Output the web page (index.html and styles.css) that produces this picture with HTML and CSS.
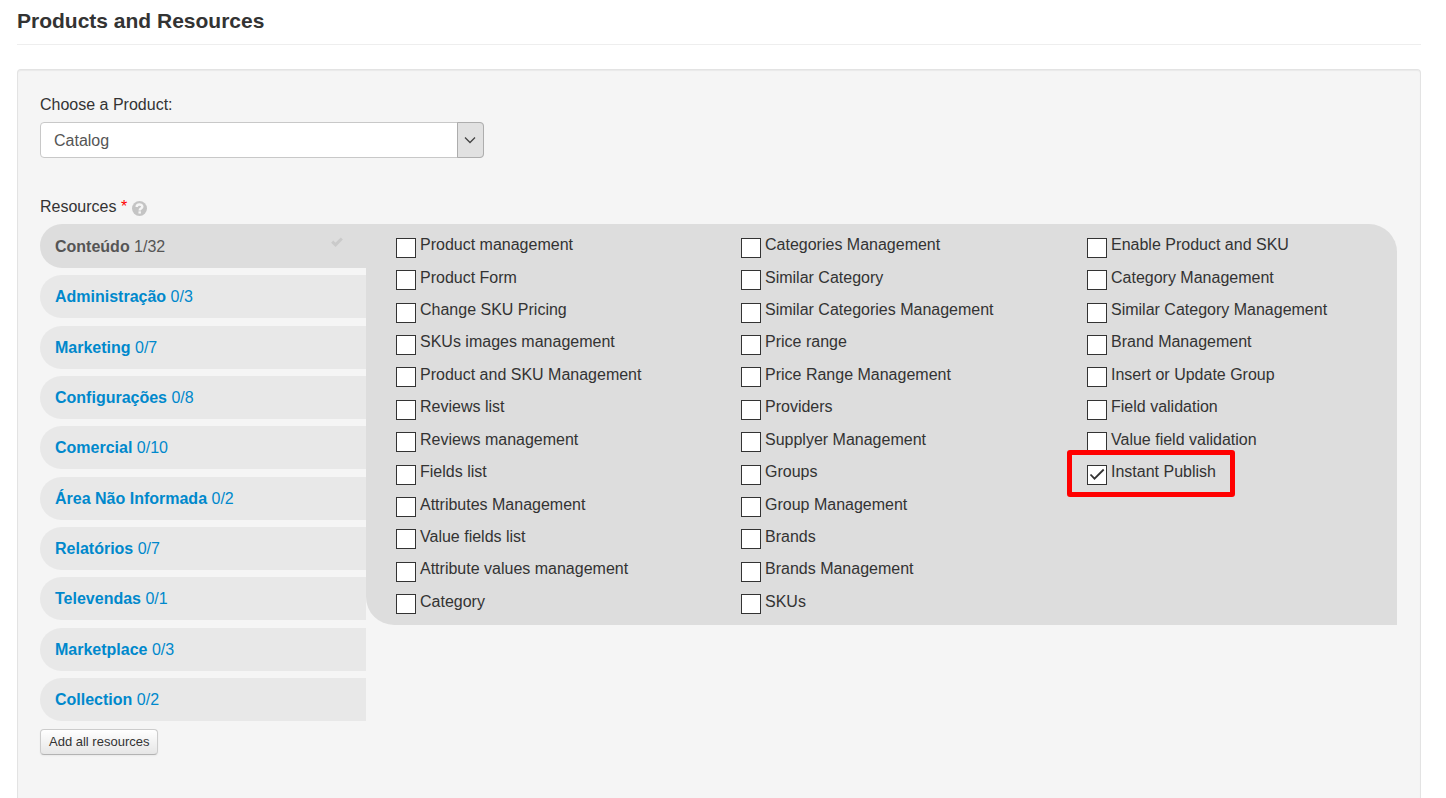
FILE: index.html
```html
<!DOCTYPE html>
<html lang="en">
<head>
<meta charset="utf-8">
<title>Products and Resources</title>
<link rel="stylesheet" href="styles.css">
</head>
<body>
<main class="page">
  <h1 class="title">Products and Resources</h1>
  <form class="well">
    <label class="field-label" for="product">Choose a Product:</label>
    <div class="select-wrap">
      <select id="product" class="select"><option>Catalog</option></select>
      <span class="select-arrow"><svg width="12" height="8" viewBox="0 0 12 8"><path d="M1 1.500 6 6.500 11 1.500" fill="none" stroke="#444" stroke-width="1.300"/></svg></span>
    </div>
    <div class="resources-label">Resources <span class="required">*</span>
      <svg class="help" width="15" height="15" viewBox="0 0 16 16"><circle cx="8" cy="8" r="8" fill="#c4c4c4"/><path d="M5 6.300C5 2.900 11 2.900 11 6.200 11 8.200 8.200 8 8.200 10" fill="none" stroke="#f5f5f5" stroke-width="2.600"/><rect x="6.900" y="11" width="2.600" height="2.400" fill="#f5f5f5"/></svg>
    </div>
    <div class="resources">
      <nav class="tabs">
        <a class="tab active" href="#conteudo"><span><b>Conteúdo</b> 1/32</span><svg class="tick" width="12" height="10" viewBox="0 0 12 10"><path d="M1.200 4.600 4.500 7.800 10.800 1.500" fill="none" stroke="#cacaca" stroke-width="3"/></svg></a>
        <a class="tab" href="#administracao"><span><b>Administração</b> 0/3</span></a>
        <a class="tab" href="#marketing"><span><b>Marketing</b> 0/7</span></a>
        <a class="tab" href="#configuracoes"><span><b>Configurações</b> 0/8</span></a>
        <a class="tab" href="#comercial"><span><b>Comercial</b> 0/10</span></a>
        <a class="tab" href="#area"><span><b>Área Não Informada</b> 0/2</span></a>
        <a class="tab" href="#relatorios"><span><b>Relatórios</b> 0/7</span></a>
        <a class="tab" href="#televendas"><span><b>Televendas</b> 0/1</span></a>
        <a class="tab" href="#marketplace"><span><b>Marketplace</b> 0/3</span></a>
        <a class="tab" href="#collection"><span><b>Collection</b> 0/2</span></a>
      </nav>
      <div class="options" id="conteudo">
        <label class="option"><input type="checkbox">Product management</label>
        <label class="option"><input type="checkbox">Product Form</label>
        <label class="option"><input type="checkbox">Change SKU Pricing</label>
        <label class="option"><input type="checkbox">SKUs images management</label>
        <label class="option"><input type="checkbox">Product and SKU Management</label>
        <label class="option"><input type="checkbox">Reviews list</label>
        <label class="option"><input type="checkbox">Reviews management</label>
        <label class="option"><input type="checkbox">Fields list</label>
        <label class="option"><input type="checkbox">Attributes Management</label>
        <label class="option"><input type="checkbox">Value fields list</label>
        <label class="option"><input type="checkbox">Attribute values management</label>
        <label class="option"><input type="checkbox">Category</label>
        <label class="option"><input type="checkbox">Categories Management</label>
        <label class="option"><input type="checkbox">Similar Category</label>
        <label class="option"><input type="checkbox">Similar Categories Management</label>
        <label class="option"><input type="checkbox">Price range</label>
        <label class="option"><input type="checkbox">Price Range Management</label>
        <label class="option"><input type="checkbox">Providers</label>
        <label class="option"><input type="checkbox">Supplyer Management</label>
        <label class="option"><input type="checkbox">Groups</label>
        <label class="option"><input type="checkbox">Group Management</label>
        <label class="option"><input type="checkbox">Brands</label>
        <label class="option"><input type="checkbox">Brands Management</label>
        <label class="option"><input type="checkbox">SKUs</label>
        <label class="option"><input type="checkbox">Enable Product and SKU</label>
        <label class="option"><input type="checkbox">Category Management</label>
        <label class="option"><input type="checkbox">Similar Category Management</label>
        <label class="option"><input type="checkbox">Brand Management</label>
        <label class="option"><input type="checkbox">Insert or Update Group</label>
        <label class="option"><input type="checkbox">Field validation</label>
        <label class="option"><input type="checkbox">Value field validation</label>
        <label class="option highlighted"><input type="checkbox" checked>Instant Publish<svg class="check-mark" width="20" height="20" viewBox="0 0 20 20"><path d="M3.500 10.500 7.500 14.700 16.700 5.500" fill="none" stroke="#333" stroke-width="1.800"/></svg></label>
      </div>
    </div>
    <button class="btn" type="button">Add all resources</button>
  </form>
</main>
</body>
</html>
```
FILE: styles.css
```css
*,
*::after {
  box-sizing: border-box;
}

body {
  margin: 0;
  background: #fff;
  color: #333;
  font: 16px/20px "Liberation Sans", Arial, sans-serif;
}

.page {
  display: flex;
  flex-direction: column;
  min-height: 100vh;
  padding: 0 25px 0 17px;
}

.title {
  margin: 0 0 24px;
  padding: 8px 0 10px;
  border-bottom: 1px solid #eee;
  font-size: 21px;
  line-height: 26px;
}

.well {
  flex: 1;
  padding: 25px 23px 24px 22px;
  border: 1px solid #e3e3e3;
  border-bottom: 0;
  border-radius: 4px 4px 0 0;
  background: #f5f5f5;
  box-shadow: inset 0 1px 1px rgba(0, 0, 0, 0.05);
}

.field-label {
  display: block;
  margin-bottom: 7px;
}

.select-wrap {
  position: relative;
  width: 444px;
  max-width: 100%;
}

.select {
  display: block;
  width: 100%;
  height: 36px;
  padding: 1px 40px 0 13px;
  border: 1px solid #c8c8c8;
  border-radius: 4px;
  appearance: none;
  background: #fff;
  color: #555;
  font: inherit;
}

.select-arrow {
  position: absolute;
  top: 0;
  right: 0;
  bottom: 0;
  display: flex;
  align-items: center;
  justify-content: center;
  width: 27px;
  padding-right: 2px;
  border: 1px solid #adadad;
  border-radius: 0 4px 4px 0;
  background: #e1e1e1;
  pointer-events: none;
}

.resources-label {
  margin: 39px 0 7px;
}

.required {
  color: #f00;
}

.help {
  vertical-align: -4px;
}

.resources {
  display: flex;
  align-items: flex-start;
}

.tabs {
  display: flex;
  flex: 0 0 326px;
  flex-direction: column;
  justify-content: space-between;
  min-height: 497px;
}

.tab {
  display: flex;
  justify-content: space-between;
  padding: 12px 23px 11px 15px;
  border-radius: 22px 0 0 22px;
  background: #e8e8e8;
  color: #08c;
  text-decoration: none;
}

.tab.active {
  padding-top: 13px;
  background: #ddd;
  color: #555;
}

.options {
  display: grid;
  flex: 1;
  grid-auto-flow: column;
  grid-template-rows: repeat(12, 1fr);
  grid-template-columns: 345fr 346fr 310fr;
  min-height: 401px;
  padding: 5px 0 7px 30px;
  border-radius: 0 28px 0 28px;
  background: #ddd;
}

.option {
  position: relative;
  display: flex;
  align-items: center;
}

.option input {
  width: 20px;
  height: 20px;
  margin: 5px 4px 0 0;
  border: 1px solid #333;
  appearance: none;
  background: #fff;
}

.check-mark {
  position: absolute;
  top: 8px;
  left: 0;
}

.highlighted::after {
  content: "";
  position: absolute;
  top: -6px;
  left: -20px;
  width: 168px;
  height: 47px;
  border: 5px solid #f00;
  border-radius: 3px;
}

.btn {
  display: block;
  margin-top: 8px;
  padding: 2px 8px;
  border: 1px solid #ccc;
  border-bottom-color: #b3b3b3;
  border-radius: 4px;
  background: linear-gradient(#fff, #e6e6e6);
  box-shadow: 0 1px 2px rgba(0, 0, 0, 0.05);
  color: #333;
  font: 13px/20px "Liberation Sans", Arial, sans-serif;
}
```
